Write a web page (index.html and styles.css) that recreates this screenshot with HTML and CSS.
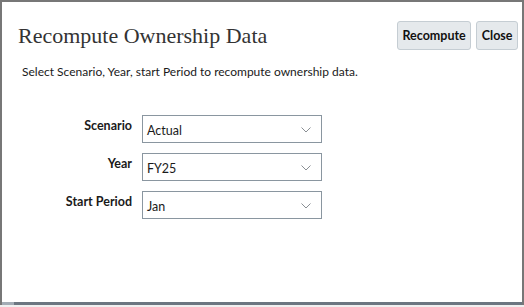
FILE: index.html
```html
<!DOCTYPE html>
<html lang="en">
<head>
  <meta charset="UTF-8" />
  <title>Recompute Ownership Data</title>
  <link rel="stylesheet" href="styles.css">
</head>
<body>

  <div class="dialog">
    <div class="dialog-header">
      <h1 class="dialog-title">Recompute Ownership Data</h1>
      <div class="dialog-buttons">
        <button class="btn">Recompute</button>
        <button class="btn">Close</button>
      </div>
    </div>

    <p class="dialog-text">Select Scenario, Year, start Period to recompute ownership data.</p>

    <div class="form">
      <label class="form-label">Scenario</label>
      <div class="select">
        <span>Actual</span>
        <svg class="chevron" width="10" height="6" viewBox="0 0 10 6"><path d="M0.5 0.5 L5 5 L9.5 0.5" fill="none" stroke="#8a8f94" stroke-width="1"/></svg>
      </div>

      <label class="form-label">Year</label>
      <div class="select">
        <span>FY25</span>
        <svg class="chevron" width="10" height="6" viewBox="0 0 10 6"><path d="M0.5 0.5 L5 5 L9.5 0.5" fill="none" stroke="#8a8f94" stroke-width="1"/></svg>
      </div>

      <label class="form-label">Start Period</label>
      <div class="select">
        <span>Jan</span>
        <svg class="chevron" width="10" height="6" viewBox="0 0 10 6"><path d="M0.5 0.5 L5 5 L9.5 0.5" fill="none" stroke="#8a8f94" stroke-width="1"/></svg>
      </div>
    </div>

    <div class="scrollbar"><div class="scroll-thumb"></div></div>
  </div>

</body>
</html>
```

FILE: styles.css
```css
html, body {
  margin: 0;
  padding: 0;
  background-color: #f0f0f0;
}

body {
  font-family: Lato, 'Open Sans', sans-serif;
  color: #1a1a1a;
  width: 524px;
  height: 307px;
}

.dialog {
  box-sizing: border-box;
  width: 524px;
  height: 305px;
  background-color: #fff;
  border: 2px solid #777;
  border-bottom: none;
  display: flex;
  flex-direction: column;
}

.dialog-header {
  display: flex;
  justify-content: space-between;
  align-items: flex-start;
  padding: 19px 4px 0 16px;
}

.dialog-title {
  margin: 2px 0 0 0;
  font-family: 'Liberation Serif', serif;
  font-weight: normal;
  font-size: 22px;
  color: #333;
}

.dialog-buttons {
  display: flex;
  gap: 5px;
}

.btn {
  font-family: Lato, 'Open Sans', sans-serif;
  font-weight: bold;
  font-size: 12.5px;
  color: #111;
  height: 29px;
  padding: 0 4.5px;
  background-color: #e5e9ec;
  border: 1px solid #c5cdd3;
  border-radius: 3px;
}

.dialog-text {
  margin: 14px 0 0 20px;
  font-size: 12px;
}

.form {
  display: grid;
  grid-template-columns: 130px 180px;
  column-gap: 10px;
  row-gap: 10px;
  margin-top: 36px;
}

.form-label {
  text-align: right;
  font-weight: bold;
  font-size: 12.5px;
  padding-top: 3px;
}

.select {
  box-sizing: border-box;
  height: 28px;
  border: 1px solid #8a96a0;
  display: flex;
  align-items: center;
  justify-content: space-between;
  padding: 2px 10px 0 4px;
  font-size: 12.5px;
}

.scrollbar {
  margin-top: auto;
  height: 3px;
  background-color: #6c7681;
}

.scroll-thumb {
  width: 12px;
  height: 3px;
  background-color: #a3acb5;
}
```
